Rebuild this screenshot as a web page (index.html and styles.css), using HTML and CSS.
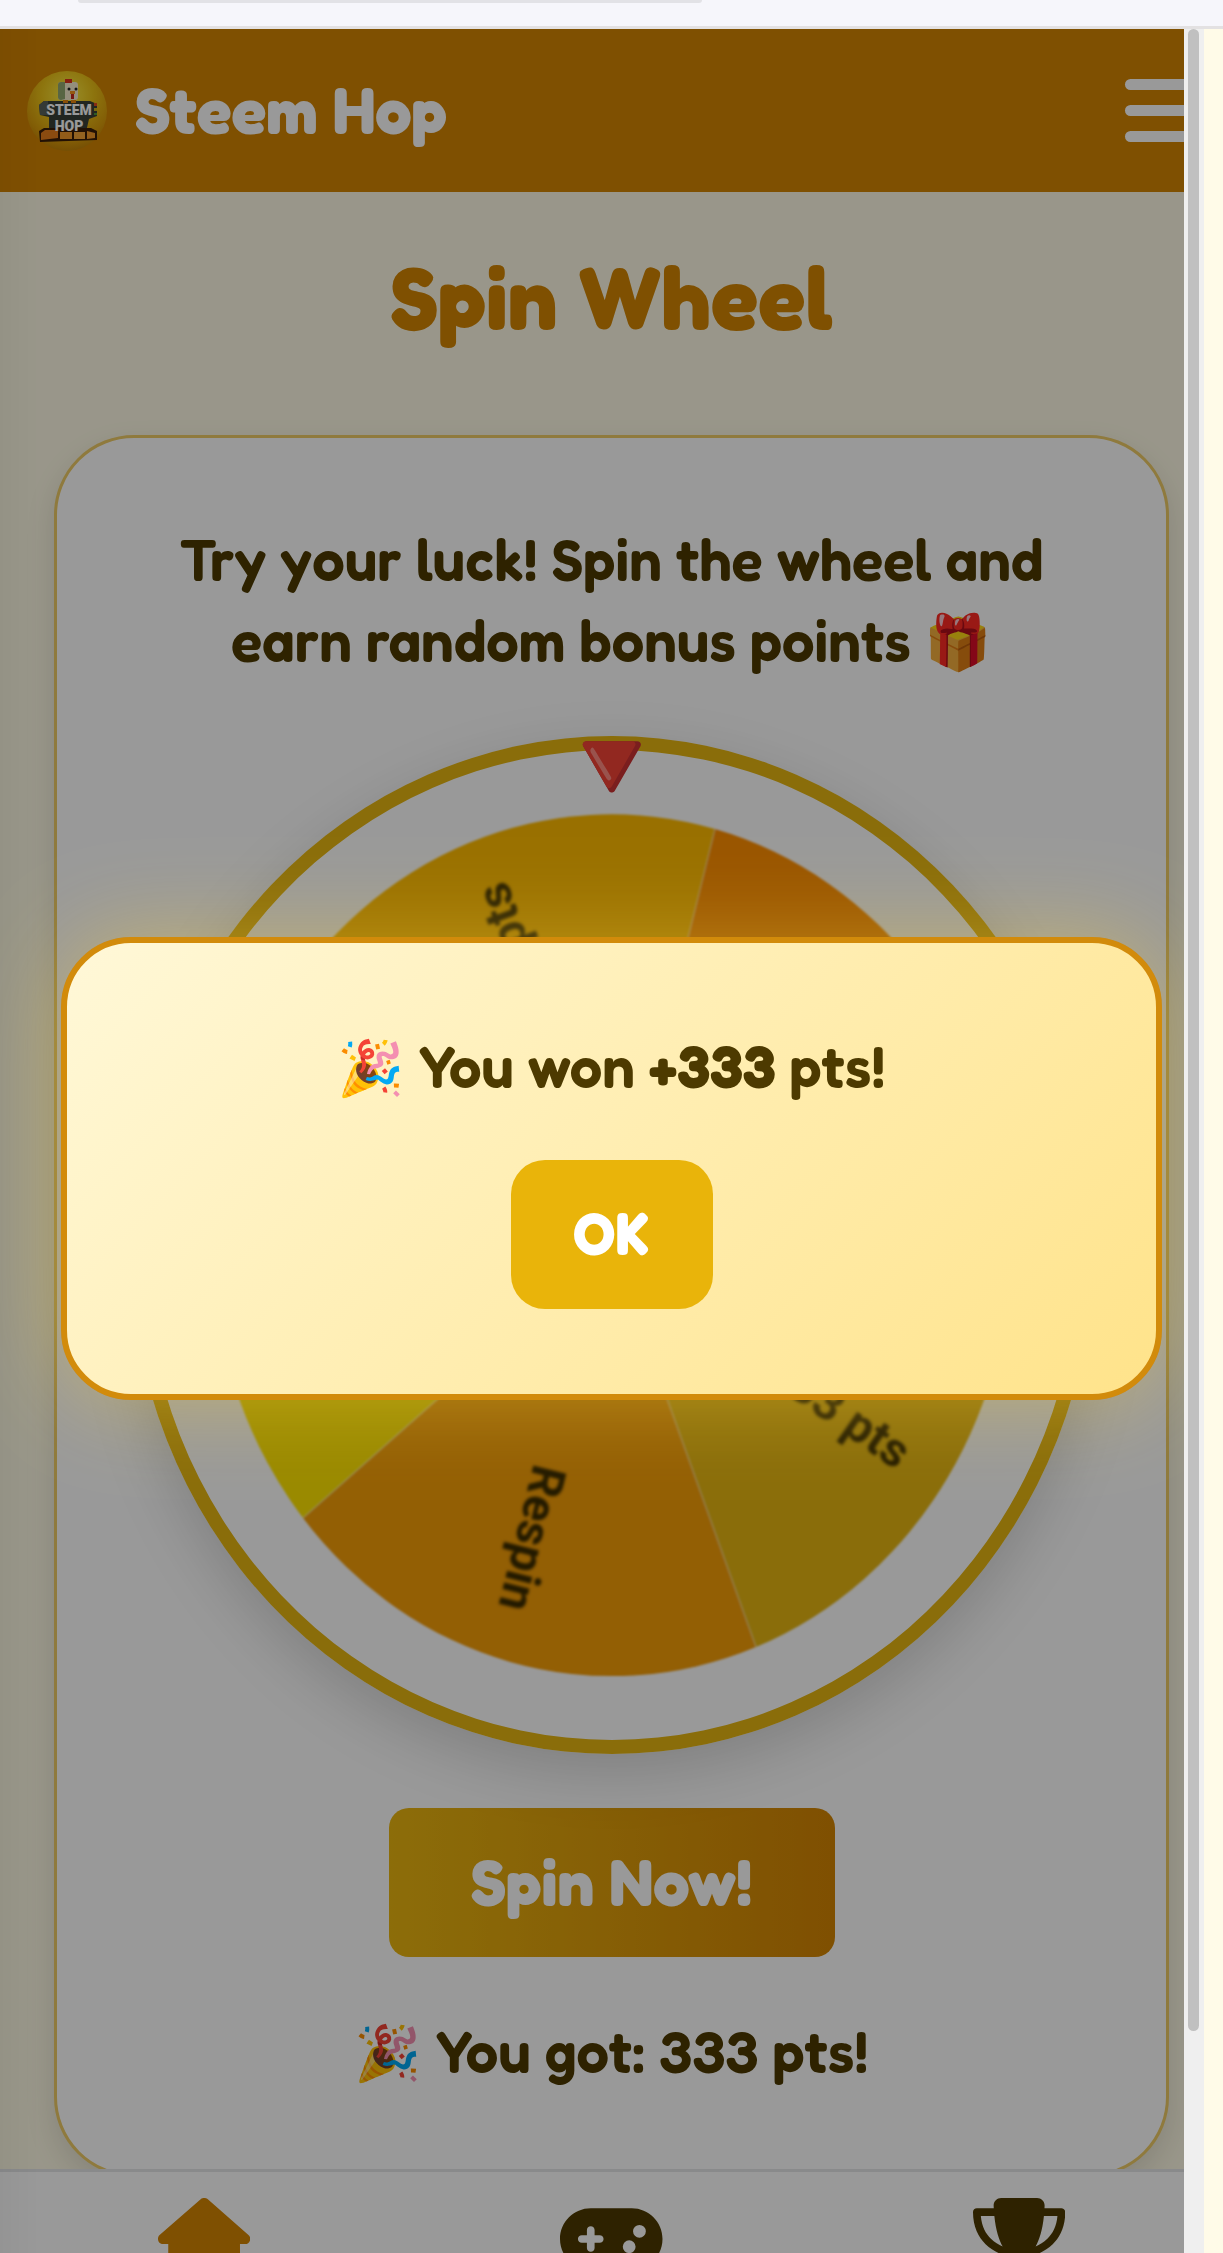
FILE: index.html
```html
<!DOCTYPE html>
<html lang="en">
<head>
<meta charset="utf-8">
<meta name="viewport" content="width=device-width, initial-scale=1">
<title>Steem Hop – Spin Wheel</title>
<link rel="stylesheet" href="styles.css">
</head>
<body>
<div class="browser-bar"><div class="address"></div></div>
<div class="stage">
  <header class="topbar">
    <svg class="logo" viewBox="0 0 80 80" role="img" aria-label="Steem Hop logo">
      <defs>
        <radialGradient id="ball" cx="50%" cy="30%" r="72%">
          <stop offset="0" stop-color="#fff04a"/>
          <stop offset=".45" stop-color="#ecc318"/>
          <stop offset=".8" stop-color="#d99b0a"/>
          <stop offset="1" stop-color="#c08008"/>
        </radialGradient>
      </defs>
      <circle cx="40" cy="40" r="40" fill="url(#ball)"/>
      <path d="M12 34l5-4h46l7 3v12l-8 3-3 13H22V46l-9-2z" fill="#3a4038"/>
      <path d="M12 34l5-4h4v14h-8z" fill="#59625a"/>
      <path d="M67 32h3v3h-3z" fill="#e24a22"/><path d="M67 37h3v3h-3z" fill="#c9b01c"/><path d="M67 42h3v2h-3z" fill="#4f9a3a"/>
      <rect x="31" y="11" width="20" height="18" rx="3" fill="#f7edcf"/>
      <path d="M31 14q0-3 3-3h4v17l-4 1q-3 0-3-3z" fill="#93a870"/>
      <path d="M38 8h7v4h-7z" fill="#e0321c"/>
      <circle cx="42" cy="18" r="1.500" fill="#222"/><circle cx="49" cy="18" r="1.500" fill="#222"/>
      <path d="M43 20h5v3h-5z" fill="#f7941d"/><path d="M44 23h3v5h-3z" fill="#c9271c"/>
      <path d="M36 29h5v3h-5zM44 29h5v3h-5z" fill="#e8860f"/>
      <path d="M12 60l5-3h47l6 3v9l-57 2z" fill="#3a1d08"/>
      <path d="M14 62l4-3h13v8l-17 2z" fill="#e77d1b"/><path d="M33 61h12v7H33z" fill="#f39a2a"/><path d="M47 61h11v7H47z" fill="#f7a637"/><path d="M60 60l8 2v5l-8 1z" fill="#f39a2a"/>
      <text x="42" y="44" class="logo-text">STEEM</text>
      <text x="42" y="60" class="logo-text">HOP</text>
    </svg>
    <span class="brand">Steem Hop</span>
    <button class="menu" type="button" aria-label="Menu"><span></span><span></span><span></span></button>
  </header>

  <main class="content">
    <h1 class="title">Spin Wheel</h1>
    <section class="card">
      <p class="lead">Try your luck! Spin the wheel and earn random bonus points <span class="emoji">🎁</span></p>
      <div class="wheel">
        <span class="pointer">🔻</span>
        <svg class="sectors" viewBox="-482 -509 964 1018" aria-hidden="true">
          <path d="M0 0L398 -24A399 431 0 0 1 144 402Z" fill="#e6b612"/>
          <path d="M0 0L144 402A399 431 0 0 1 -309 273Z" fill="#f59e08"/>
          <path d="M0 0L-309 273A399 431 0 0 1 -335 -234Z" fill="#ffe400"/>
          <path d="M0 0L-335 -234A399 431 0 0 1 103 -416Z" fill="#ffbb00"/>
          <path d="M0 0L103 -416A399 431 0 0 1 398 -24Z" fill="#ff8e00"/>
          <path d="M0 0L398 -24M0 0L144 402M0 0L-309 273M0 0L-335 -234M0 0L103 -416" class="seams"/>
          <g class="labels">
            <text transform="rotate(35)" x="362" y="22">33 pts</text>
            <text transform="rotate(104)" x="378" y="23">Respin</text>
            <text transform="rotate(250)" x="380" y="26">pts</text>
          </g>
        </svg>
      </div>
      <button class="spin" type="button">Spin Now!</button>
      <p class="result"><span class="emoji">🎉</span> You got: 333 pts!</p>
    </section>
  </main>

  <nav class="tabs">
    <a href="#home" class="tab active" aria-label="Home"><svg viewBox="0 0 576 512"><path d="M575.8 255.5c0 18-15 32.1-32 32.1h-32l.7 160.2c0 2.7-.2 5.4-.5 8.1V472c0 22.1-17.9 40-40 40H392c-22.1 0-40-17.9-40-40V384c0-17.7-14.3-32-32-32H256c-17.7 0-32 14.3-32 32v88c0 22.1-17.9 40-40 40H104c-22.1 0-40-17.9-40-40V287.6H32c-18 0-32-14-32-32.1c0-9 3-17 10-24L266.4 8c7-7 15-8 22-8s15 2 21 7L564.8 231.500c8 7 12 15 11 24z"/></svg></a>
    <a href="#play" class="tab" aria-label="Play"><svg viewBox="0 0 640 512"><path d="M192 64C86 64 0 150 0 256S86 448 192 448H448c106 0 192-86 192-192s-86-192-192-192H192zM496 168a40 40 0 1 1 0 80 40 40 0 1 1 0-80zM392 304a40 40 0 1 1 80 0 40 40 0 1 1 -80 0zM168 200c0-13.3 10.7-24 24-24s24 10.7 24 24v32h32c13.3 0 24 10.7 24 24s-10.7 24-24 24H216v32c0 13.3-10.7 24-24 24s-24-10.7-24-24V280H136c-13.3 0-24-10.7-24-24s10.7-24 24-24h32V200z"/></svg></a>
    <a href="#ranks" class="tab" aria-label="Leaderboard"><svg viewBox="0 0 576 512"><path d="M400 0H176c-26.5 0-48.1 21.8-47.1 48.2c.2 5.3 .4 10.6 .7 15.8H24C10.7 64 0 74.7 0 88c0 92.6 33.5 157 78.5 200.7c44.3 43.1 98.3 64.8 138.1 75.8c23.4 6.5 39.4 26 39.4 45.6c0 20.9-17 37.9-37.9 37.9H192c-17.7 0-32 14.3-32 32s14.3 32 32 32H384c17.7 0 32-14.3 32-32s-14.3-32-32-32H357.9C337 448 320 431 320 410.1c0-19.6 15.9-39.2 39.4-45.6c39.9-11 93.9-32.7 138.2-75.8C542.5 245 576 180.6 576 88c0-13.3-10.7-24-24-24H446.4c.3-5.2 .5-10.4 .7-15.8C448.1 21.8 426.5 0 400 0zM48.9 112h84.4c9.1 90.1 29.2 150.3 51.9 190.6c-24.9-11-50.8-26.5-73.2-48.3c-32-31.1-58-76-63-142.3zM464.1 254.3c-22.4 21.8-48.3 37.3-73.2 48.3c22.7-40.3 42.8-100.5 51.9-190.6h84.400c-5.1 66.3-31.1 111.2-63 142.3z"/></svg></a>
  </nav>

  <div class="backdrop">
    <div class="dialog" role="dialog" aria-modal="true" aria-labelledby="won">
      <p class="won" id="won"><span class="emoji">🎉</span> You won <strong>+333</strong> pts!</p>
      <button class="ok" type="button">OK</button>
    </div>
  </div>
  <div class="rail"><div class="thumb"></div></div>
</div>
</body>
</html>
```
FILE: styles.css
```css
* { box-sizing: border-box; }

body {
  margin: 0;
  height: 100vh;
  display: flex;
  flex-direction: column;
  overflow: hidden;
  background: #fffbe8;
  color: #4d3a00;
  font-family: Fredoka, "Baloo 2", Nunito, sans-serif;
  font-weight: 600;
}

button { border: 0; padding: 0 0 4px; font: inherit; color: #fff; cursor: pointer; }
p, h1 { margin: 0; font-weight: inherit; }
strong { font-weight: 700; }

/* browser chrome */
.browser-bar {
  flex: none;
  height: 29px;
  background: #f6f6fb;
  border-bottom: 3px solid #e3e1e2;
}
.address {
  width: 51%;
  height: 3px;
  margin-left: 78px;
  background: #e2e2e6;
  border-radius: 0 0 24px 24px;
}

.stage {
  position: relative;
  flex: 1;
  min-height: 0;
  display: flex;
  flex-direction: column;
  overflow: hidden;
}

/* header */
.topbar {
  flex: none;
  display: flex;
  align-items: center;
  gap: 28px;
  height: 163px;
  padding: 0 24px 0 27px;
  background: #d48503;
  color: #fff;
}
.logo { width: 80px; height: 80px; }
.logo-text {
  font: 900 14px Roboto, sans-serif;
  fill: #fff;
  text-anchor: middle;
}
.brand { padding-bottom: 4px; font-size: 65px; font-weight: 700; }
.menu {
  display: grid;
  gap: 15px;
  width: 74px;
  margin-left: auto;
  padding: 0;
  background: none;
}
.menu span { height: 11px; border-radius: 6px; background: #fff; }

/* page */
.content {
  flex: 1;
  min-height: 0;
  overflow: hidden;
  padding: 57px 54px 0;
  background: #fffbe6;
}
.title {
  font-size: 88px;
  font-weight: 700;
  line-height: 96px;
  text-align: center;
  color: #d48503;
}
.card {
  display: flex;
  flex-direction: column;
  align-items: center;
  margin-top: 90px;
  padding: 81px 70px 82px;
  border: 3px solid #eecb66;
  border-radius: 80px;
  background: #fff;
  box-shadow: 0 12px 30px rgba(0, 0, 0, .12);
  text-align: center;
}
.lead, .result, .won { font-size: 58px; line-height: 81px; }
.emoji {
  display: inline-block;
  font-family: "Noto Color Emoji", sans-serif;
  font-size: 54px;
  line-height: 1;
}

.wheel {
  position: relative;
  width: 100%;
  max-width: 964px;
  margin: 55px 0 54px;
  border-radius: 50%;
  box-shadow: inset 0 0 0 14px #e6b612, 0 20px 60px rgba(0, 0, 0, .16);
}
.sectors { display: block; width: 100%; filter: blur(1px); }
.seams { fill: none; stroke: rgba(255, 255, 255, .3); stroke-width: 2px; }
.labels {
  font: 700 48px Roboto, sans-serif;
  fill: #382a00;
  text-anchor: end;
  filter: blur(1px);
}
.pointer {
  position: absolute;
  z-index: 1;
  top: -27px;
  left: 0;
  right: 0;
  font-size: 100px;
  line-height: 112px;
}

.spin {
  width: 446px;
  height: 149px;
  border-radius: 20px;
  background: linear-gradient(90deg, #eab610, #d48503);
  font-size: 65px;
  font-weight: 700;
}
.result { margin-top: 54px; }

/* bottom tabs */
.tabs {
  flex: none;
  display: grid;
  grid-template-columns: repeat(3, 1fr);
  height: 84px;
  padding-top: 26px;
  border-top: 3px solid #e4e6e8;
  background: #fff;
}
.tab { display: flex; justify-content: center; color: #4d3a00; }
.tab svg { flex: none; height: 82px; fill: currentColor; }
.tab.active { color: #d48503; }

/* dialog */
.backdrop {
  position: absolute;
  z-index: 2;
  inset: 0;
  display: grid;
  align-content: start;
  padding: 908px 61px 0;
  background: linear-gradient(90deg, rgba(0, 0, 0, .03), transparent 40px), rgba(0, 0, 0, .4);
}
.dialog {
  display: flex;
  flex-direction: column;
  align-items: center;
  gap: 53px;
  padding: 83px 48px 85px;
  border: 6px solid #d28b0b;
  border-radius: 70px;
  background: linear-gradient(135deg, #fff8d8, #ffe38a);
  box-shadow: 0 0 90px rgba(255, 215, 60, .4);
}
.won { text-align: center; }
.ok {
  width: 202px;
  height: 149px;
  border-radius: 34px;
  background: #e9b40a;
  font-size: 58px;
  font-weight: 700;
}

/* scroll rail beside the page */
.rail {
  position: absolute;
  z-index: 3;
  inset: 0 0 0 auto;
  width: 39px;
  padding-left: 4px;
  background: linear-gradient(90deg, #efefef 20px, #fffbe8 20px);
}
.thumb { width: 11px; height: 90%; border-radius: 6px; background: #c0c0c0; }
```
